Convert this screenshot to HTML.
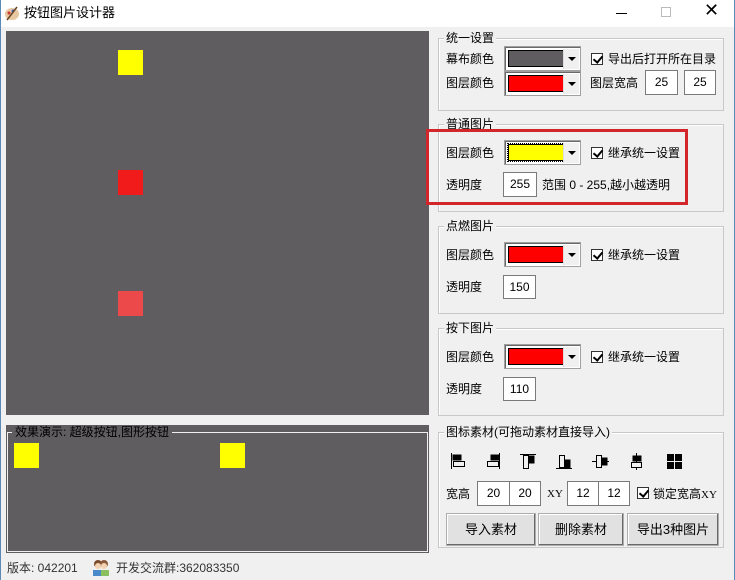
<!DOCTYPE html>
<html><head><meta charset="utf-8"><style>
*{margin:0;padding:0;box-sizing:border-box}
body{width:735px;height:580px;overflow:hidden;background:#f0f0f0;font-family:"Liberation Sans","Noto Sans CJK SC","WenQuanYi Zen Hei",sans-serif;font-size:12px;color:#000;position:relative}
.a{position:absolute}
.t{position:absolute;white-space:nowrap;line-height:14px}
.g{position:absolute;border:1px solid #c8c8c8;box-shadow:inset 1px 1px 0 #fff}
.gt{position:absolute;background:#f0f0f0;padding:0 2px;line-height:14px;white-space:nowrap}
.combo{position:absolute;width:77px;height:25px;background:#fff;border:1px solid #a0a0a0;box-shadow:inset 1px 1px 0 #696969}
.combo .sw{position:absolute;left:3px;top:3px;width:56px;height:17px;border:1px solid #000}
.combo .bt{position:absolute;right:1px;top:2px;width:16px;height:20px;background:#f0f0f0;border-left:1px solid #ddd}
.combo .bt:after{content:"";position:absolute;left:4px;top:8px;border-left:4px solid transparent;border-right:4px solid transparent;border-top:4px solid #000}
.cb{position:absolute;width:12px;height:12px;border:1px solid #333;background:#fff}
.cb:after{content:"";position:absolute;left:3px;top:0px;width:4px;height:7px;border:solid #000;border-width:0 2px 2px 0;transform:rotate(40deg)}
.in{position:absolute;background:#fff;border:1px solid #7a7a7a;text-align:center;line-height:22px;font-size:12px}
.btn{position:absolute;height:33px;background:#e1e1e1;border:1px solid #adadad;box-shadow:inset -1px -1px 0 #696969,inset 1px 1px 0 #fff;text-align:center;line-height:31px;font-size:13px}
.sq{position:absolute;width:25px;height:25px}
</style></head><body>
<div class="a" style="left:0;top:0;width:735px;height:27px;background:#fff"></div>
<div class="a" style="left:0;top:0;width:1px;height:580px;background:#5c8ab8"></div>
<div class="a" style="right:0;top:0;width:1px;height:580px;background:#5c8ab8"></div>
<svg class="a" style="left:4px;top:5px" width="16" height="16"><ellipse cx="8" cy="9" rx="7" ry="6" fill="#e8c8a0"/><circle cx="5" cy="8" r="1.5" fill="#c33"/><circle cx="9" cy="6" r="1.5" fill="#36c"/><line x1="3" y1="15" x2="13" y2="2" stroke="#642" stroke-width="1.5"/></svg>
<div class="t" style="left:24px;top:6px;font-size:13px">按钮图片设计器</div>
<div class="a" style="left:616px;top:13px;width:11px;height:1px;background:#000"></div>
<div class="a" style="left:661px;top:7px;width:10px;height:10px;border:1px solid #bbb"></div>
<div class="t" style="left:704px;top:3px;font-size:18px;font-weight:300">✕</div>

<div class="a" style="left:6px;top:31px;width:423px;height:384px;background:#5f5d60"></div>
<div class="sq" style="left:118px;top:50px;background:#ffff00"></div>
<div class="sq" style="left:118px;top:170px;background:#f21b1b"></div>
<div class="sq" style="left:118px;top:291px;background:#ec4a4a"></div>

<div class="a" style="left:6px;top:425px;width:423px;height:128px;background:#5f5d60"></div>
<div class="a" style="left:7px;top:432px;width:421px;height:120px;border:1px solid #f0f0f0"></div>
<div class="gt" style="left:12px;top:425px;background:#5f5d60;color:#000;padding:0 3px">效果演示: 超级按钮,图形按钮</div>
<div class="sq" style="left:14px;top:443px;background:#ffff00"></div>
<div class="sq" style="left:220px;top:443px;background:#ffff00"></div>

<div class="t" style="left:7px;top:561px;color:#333">版本: 042201</div>
<svg class="a" style="left:91px;top:557px" width="19" height="19"><circle cx="7" cy="7" r="4" fill="#7a4a2a"/><circle cx="13" cy="7" r="4" fill="#8a5a3a"/><circle cx="7" cy="9" r="3" fill="#f3d3b3"/><circle cx="13" cy="9" r="3" fill="#f3d3b3"/><rect x="2" y="13" width="8" height="6" fill="#4a8ac8"/><rect x="10" y="13" width="8" height="6" fill="#8ac060"/></svg>
<div class="t" style="left:116px;top:561px;color:#333">开发交流群:362083350</div>

<!-- group 1 -->
<div class="g" style="left:438px;top:38px;width:286px;height:73px"></div>
<div class="gt" style="left:444px;top:31px">统一设置</div>
<div class="t" style="left:446px;top:52px">幕布颜色</div>
<div class="combo" style="left:504px;top:46px"><div class="sw" style="background:#5f5d60"></div><div class="bt"></div></div>
<div class="cb" style="left:591px;top:53px"></div>
<div class="t" style="left:608px;top:52px">导出后打开所在目录</div>
<div class="t" style="left:446px;top:76px">图层颜色</div>
<div class="combo" style="left:504px;top:71px"><div class="sw" style="background:#ff0000"></div><div class="bt"></div></div>
<div class="t" style="left:590px;top:76px">图层宽高</div>
<div class="in" style="left:645px;top:70px;width:33px;height:25px">25</div>
<div class="in" style="left:684px;top:70px;width:32px;height:25px">25</div>

<!-- group 2 -->
<div class="g" style="left:438px;top:124px;width:286px;height:88px"></div>
<div class="gt" style="left:444px;top:117px">普通图片</div>
<div class="t" style="left:446px;top:146px">图层颜色</div>
<div class="combo" style="left:504px;top:140px"><div class="sw" style="background:#ffff00;outline:1px dotted #000"></div><div class="bt"></div></div>
<div class="cb" style="left:591px;top:147px"></div>
<div class="t" style="left:608px;top:146px">继承统一设置</div>
<div class="t" style="left:446px;top:178px">透明度</div>
<div class="in" style="left:503px;top:172px;width:34px;height:25px">255</div>
<div class="t" style="left:542px;top:178px">范围 0 - 255,越小越透明</div>
<div class="a" style="left:426px;top:129px;width:262px;height:76px;border:3px solid #d3262a"></div>

<!-- group 3 -->
<div class="g" style="left:438px;top:226px;width:286px;height:88px"></div>
<div class="gt" style="left:444px;top:219px">点燃图片</div>
<div class="t" style="left:446px;top:248px">图层颜色</div>
<div class="combo" style="left:504px;top:242px"><div class="sw" style="background:#ff0000"></div><div class="bt"></div></div>
<div class="cb" style="left:591px;top:249px"></div>
<div class="t" style="left:608px;top:248px">继承统一设置</div>
<div class="t" style="left:446px;top:280px">透明度</div>
<div class="in" style="left:503px;top:275px;width:33px;height:24px">150</div>

<!-- group 4 -->
<div class="g" style="left:438px;top:328px;width:286px;height:88px"></div>
<div class="gt" style="left:444px;top:321px">按下图片</div>
<div class="t" style="left:446px;top:350px">图层颜色</div>
<div class="combo" style="left:504px;top:344px"><div class="sw" style="background:#ff0000"></div><div class="bt"></div></div>
<div class="cb" style="left:591px;top:351px"></div>
<div class="t" style="left:608px;top:350px">继承统一设置</div>
<div class="t" style="left:446px;top:382px">透明度</div>
<div class="in" style="left:503px;top:377px;width:33px;height:24px">110</div>

<!-- group 5 -->
<div class="g" style="left:438px;top:432px;width:286px;height:116px"></div>
<div class="gt" style="left:444px;top:425px">图标素材(可拖动素材直接导入)</div>
<svg class="a" style="left:445px;top:450px" width="250" height="22" fill="none" stroke="#000" stroke-width="1">
<g><line x1="6.5" y1="3" x2="6.5" y2="19"/><rect x="8" y="5" width="8" height="5" fill="#000"/><rect x="8.5" y="11.5" width="11" height="5"/></g>
<g transform="translate(36,0)"><line x1="18.5" y1="3" x2="18.5" y2="19"/><rect x="10" y="5" width="8" height="5" fill="#000"/><rect x="6.5" y="11.5" width="11" height="5"/></g>
<g transform="translate(72,0)"><line x1="3" y1="4.5" x2="19" y2="4.5"/><rect x="6.5" y="5.5" width="5" height="13"/><rect x="12" y="6" width="5" height="7" fill="#000"/></g>
<g transform="translate(108,0)"><line x1="3" y1="18.5" x2="19" y2="18.5"/><rect x="6.5" y="5.5" width="5" height="12"/><rect x="12" y="10" width="5" height="8" fill="#000"/></g>
<g transform="translate(144,0)"><line x1="3" y1="11.5" x2="20" y2="11.5"/><rect x="7.5" y="5.5" width="5" height="12" fill="#f0f0f0"/><rect x="13" y="8" width="5" height="7" fill="#000"/></g>
<g transform="translate(180,0)"><line x1="11.5" y1="3" x2="11.5" y2="20"/><rect x="8" y="6" width="8" height="5" fill="#000"/><rect x="6.5" y="12.5" width="10" height="5" fill="#f0f0f0"/></g>
<g transform="translate(216,0)" fill="#000" stroke="none"><rect x="6" y="4" width="7" height="7"/><rect x="14" y="4" width="7" height="7"/><rect x="6" y="12" width="7" height="7"/><rect x="14" y="12" width="7" height="7"/></g>
</svg>
<div class="t" style="left:446px;top:487px">宽高</div>
<div class="in" style="left:477px;top:481px;width:33px;height:25px">20</div>
<div class="in" style="left:509px;top:481px;width:32px;height:25px">20</div>
<div class="t" style="left:547px;top:487px;font-size:11px;font-family:'Liberation Serif',serif">XY</div>
<div class="in" style="left:567px;top:481px;width:32px;height:25px">12</div>
<div class="in" style="left:598px;top:481px;width:32px;height:25px">12</div>
<div class="cb" style="left:637px;top:487px"></div>
<div class="t" style="left:653px;top:487px">锁定宽高<span style="font-family:'Liberation Serif',serif;font-size:11px">XY</span></div>
<div class="btn" style="left:446px;top:513px;width:90px">导入素材</div>
<div class="btn" style="left:538px;top:513px;width:86px">删除素材</div>
<div class="btn" style="left:627px;top:513px;width:92px">导出3种图片</div>
</body></html>
